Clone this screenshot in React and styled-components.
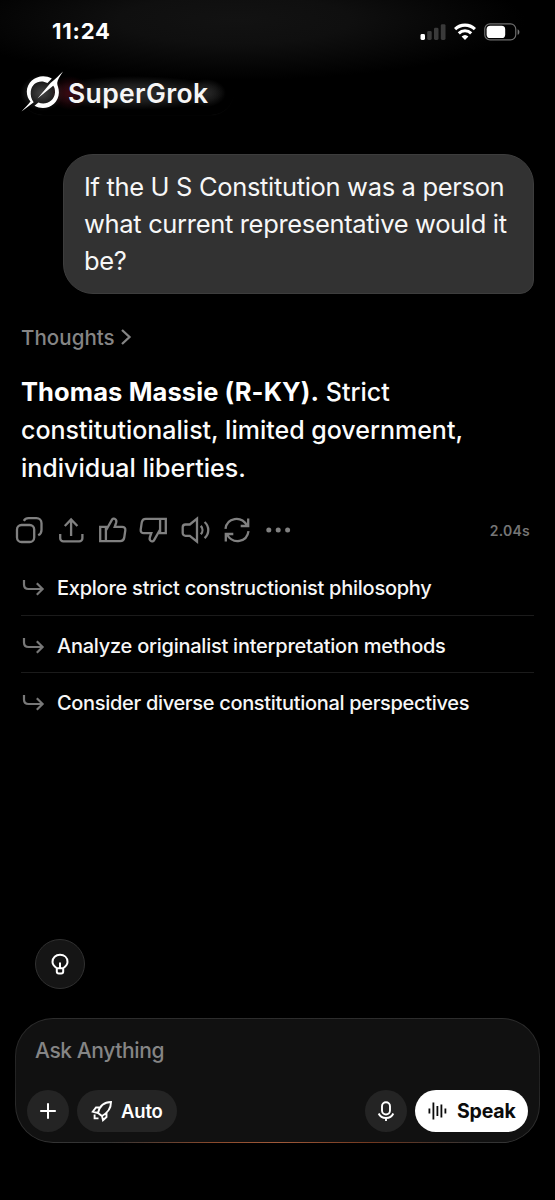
import React from "react";
import styled, { createGlobalStyle } from "styled-components";

const GlobalStyle = createGlobalStyle`
  * { box-sizing: border-box; }
  body { margin: 0; background: #000; }
  button { border: 0; padding: 0; margin: 0; font: inherit; color: inherit; background: none; }
`;

const Screen = styled.main`
  width: 555px;
  height: 1200px;
  overflow: hidden;
  display: flex;
  flex-direction: column;
  background: radial-gradient(ellipse 290px 60px at 235px 20px, #121212 0%, #0f0f0f 40%, #000 100%) #000;
  color: #fff;
  font-family: Inter, "Liberation Sans", sans-serif;
`;

const StatusBar = styled.header`
  height: 63px;
  flex: none;
  display: flex;
  align-items: center;
  justify-content: space-between;
  padding: 0 35px 0 52px;
`;

const Clock = styled.time`
  margin-top: -1px;
  font-size: 22px;
  font-weight: 700;
  letter-spacing: 0.8px;
`;

const StatusIcons = styled.div`
  display: flex;
  align-items: center;
  gap: 8px;
`;

const Brand = styled.div`
  height: 58px;
  flex: none;
  display: flex;
  align-items: center;
  padding-left: 20px;
`;

const BrandPill = styled.div`
  display: flex;
  align-items: center;
  height: 46px;
  width: 214px;
  gap: 4px;
  border-radius: 0 0 23px 23px;
  background:
    radial-gradient(ellipse 20px 17px at 50px 24px, #3c0811 0%, transparent 100%),
    radial-gradient(ellipse 22px 18px at 22px 24px, #454545 0%, transparent 100%),
    radial-gradient(ellipse 90px 17px at 115px 24px, #2c2c2c 0%, #1c1c1c 50%, transparent 100%),
    radial-gradient(ellipse 20px 14px at 186px 24px, #303030 0%, transparent 100%);
  box-shadow: 0 1px 1px -1px #1c1c1c;
`;

const BrandName = styled.h1`
  margin: 2px 0 0;
  font-size: 26.5px;
  line-height: 32px;
  font-weight: 600;
  letter-spacing: 0.35px;
  color: #f6f6f6;
`;

const Bubble = styled.section`
  width: 471px;
  height: 140px;
  flex: none;
  margin: 33px 21px 0 auto;
  padding: 13px 20px;
  border: 1px solid #3d3d3d;
  border-radius: 30px 30px 14px 30px;
  background: #323232;
`;

const Question = styled.p`
  margin: 0;
  font-size: 25.5px;
  line-height: 37.2px;
  letter-spacing: -0.33px;
  white-space: nowrap;
  color: #f7f7f7;
`;

const Thoughts = styled.button`
  display: flex;
  align-items: center;
  gap: 5px;
  height: 30px;
  margin: 28px 0 0 21px;
  font-size: 20.5px;
  font-weight: 500;
  letter-spacing: 0.05px;
  color: #858585;
`;

const Answer = styled.p`
  margin: 21px 21px 0;
  font-size: 25px;
  line-height: 38px;
  font-weight: 500;
  white-space: nowrap;
  color: #fcfcfc;
`;

const Strong = styled.strong`
  font-weight: 700;
  font-size: 25.5px;
  letter-spacing: 0.1px;
  color: #fff;
`;

const Actions = styled.div`
  display: flex;
  align-items: center;
  height: 30px;
  margin: 28px 25px 0 14px;
  gap: 11.5px;
  color: #808080;
`;

const ActionButton = styled.button`
  display: flex;
  width: 30px;
  height: 30px;
`;

const Duration = styled.span`
  margin-left: auto;
  font-size: 14px;
  font-weight: 600;
  letter-spacing: 0.25px;
  color: #757575;
`;

const Suggestions = styled.ul`
  list-style: none;
  margin: 13px 21px 0;
  padding: 0;
`;

const Suggestion = styled.li`
  display: flex;
  align-items: center;
  gap: 11px;
  height: 57px;
  padding-top: 3px;
  font-size: 20px;
  font-weight: 500;
  letter-spacing: ${(p) => p.$tracking};
  white-space: nowrap;
  color: #f7f7f7;
  & + & { border-top: 1px solid #1b1b1b; }
`;

const IdeaButton = styled.button`
  display: flex;
  align-items: center;
  justify-content: center;
  width: 50px;
  height: 50px;
  margin: auto 0 29px 35px;
  border: 1px solid #303030;
  border-radius: 50%;
  background: #151515;
  flex: none;
`;

const Composer = styled.section`
  display: flex;
  flex-direction: column;
  justify-content: space-between;
  flex: none;
  width: 525px;
  height: 125px;
  margin: 0 15px 57px;
  padding: 17px 11px 10px;
  border: 1px solid transparent;
  border-radius: 38px;
  background:
    linear-gradient(#111, #111) padding-box,
    linear-gradient(90deg, transparent 18%, #8b4a2c 38%, #a05a3a 50%, #71381f 68%, transparent 88%) 0 100% / 100% 2px no-repeat border-box,
    linear-gradient(#2d2d2d, #222 50%, #343434) border-box;
`;

const Placeholder = styled.span`
  padding-left: 8px;
  font-size: 21px;
  line-height: 30px;
  font-weight: 500;
  letter-spacing: -0.4px;
  color: #858585;
`;

const Controls = styled.div`
  display: flex;
  align-items: center;
  gap: 8px;
  height: 42px;
`;

const RoundButton = styled.button`
  display: flex;
  align-items: center;
  justify-content: center;
  width: 42px;
  height: 42px;
  border-radius: 50%;
  background: #242424;
  margin-left: ${(p) => (p.$pushRight ? "auto" : "0")};
`;

const PillButton = styled.button`
  display: flex;
  align-items: center;
  gap: ${(p) => p.$gap};
  width: ${(p) => p.$width};
  height: 42px;
  padding-left: ${(p) => p.$inset};
  border-radius: 21px;
  font-size: ${(p) => (p.$light ? "19.5px" : "18.5px")};
  font-weight: ${(p) => (p.$light ? 700 : 600)};
  letter-spacing: -0.2px;
  color: ${(p) => (p.$light ? "#0b0b0b" : "#fff")};
  background: ${(p) => (p.$light ? "#fff" : "#242424")};
`;

const Line = styled.svg.attrs((p) => ({
  fill: "none",
  stroke: p.stroke || "currentColor",
  strokeWidth: p.strokeWidth || 2.3,
  "aria-hidden": true,
}))`
  display: block;
  flex: none;
`;

function SignalIcon() {
  return (
    <svg width="26" height="18" viewBox="0 0 26 18">
      <rect x="0.5" y="11" width="4.5" height="6" rx="1.4" fill="#fff" />
      <rect x="7.2" y="8" width="4.5" height="9" rx="1.4" fill="#3a3a3a" />
      <rect x="14" y="4.7" width="4.5" height="12.3" rx="1.4" fill="#3a3a3a" />
      <rect x="20.8" y="1.2" width="4.7" height="15.8" rx="1.4" fill="#3a3a3a" />
    </svg>
  );
}

function WifiIcon() {
  return (
    <svg width="22" height="18" viewBox="0 0 22 18" fill="none" stroke="#fff" strokeWidth="3.1">
      <path d="M1.1 6.1a14.2 14.2 0 0 1 19.8 0" />
      <path d="M4.8 10.3a9 9 0 0 1 12.4 0" />
      <path d="M7.6 13.6a5 5 0 0 1 6.8 0L11 17z" fill="#fff" stroke="none" />
    </svg>
  );
}

function BatteryIcon() {
  return (
    <svg width="36" height="18" viewBox="0 0 36 18">
      <rect x="0.75" y="0.9" width="31" height="16" rx="5.2" fill="none" stroke="#6f6f6f" strokeWidth="1.2" />
      <rect x="2.6" y="2.8" width="18.6" height="12.2" rx="3.6" fill="#fff" />
      <path d="M33.6 6.2v5.6c2.4-.9 2.4-4.7 0-5.6z" fill="#777" />
    </svg>
  );
}

function GrokMark() {
  return (
    <svg width="44" height="42" viewBox="0 0 44 42" fill="#fff">
      <path d="M31.8 7.6C21 1 7 8.5 6.800 20.500C6.800 25 8.300 28 10.500 30.500C8 34 4.500 37 1.500 40.500C5.500 37.500 9.500 34.500 13.700 31.300C11.200 28 10.300 24 10.800 20C12 11.800 20 8 27.500 12z" />
      <path d="M43 .6C40 5 37.500 9 37.200 12C37.100 14.500 39 17 38.900 21.500C38.700 33.700 25.500 41 14.500 34.800L18.400 31.400C25.500 34.600 34.500 30 35 21.500C35.100 18.500 34.500 16.500 33.200 14.800L17.500 27.500L30.500 12C35.500 8.500 39 4 43 .6z" />
    </svg>
  );
}

const CopyIcon = () => (
  <Line width="30" height="30" viewBox="0 0 30 30">
    <rect x="3" y="10" width="17.200" height="17" rx="4.500" />
    <path d="M9.800 5.900C10.800 4.200 12 3.200 14.500 3.200H22.500a5 5 0 0 1 5 5v6.800c0 2.600-1.200 4.200-3.300 5.300" />
  </Line>
);
const ShareIcon = () => (
  <Line width="30" height="30" viewBox="0 0 30 30">
    <path d="M15.100 21V5M8.800 11l6.300-6.500 6.300 6.500M4.200 19v4.200a3.200 3.200 0 0 0 3.200 3.200h15.800a3.200 3.200 0 0 0 3.200-3.200V19" />
  </Line>
);
const ThumbPath = () => (
  <path d="M3.200 11.800h5.700v14.400H3.200zM8.900 15.500l6-10.600c.7-1.300 2.300-1.600 3.400-.8 1.200.8 1.300 2.100.8 3.700l-1.400 4h7.400c2.200 0 3.500 1.500 3.200 3.500l-1.100 7.500c-.4 2.200-1.800 3.400-4 3.400H8.900" />
);
const ThumbUpIcon = () => (
  <Line width="30" height="30" viewBox="0 0 30 30"><ThumbPath /></Line>
);
const ThumbDownIcon = () => (
  <Line width="30" height="30" viewBox="0 0 30 30"><g transform="rotate(180 15 15)"><ThumbPath /></g></Line>
);
const SpeakerIcon = () => (
  <Line width="30" height="30" viewBox="0 0 30 30">
    <path d="M17 3.700v22.900L9.800 20.800H5.500a2.800 2.800 0 0 1-2.800-2.800v-5.700a2.800 2.800 0 0 1 2.800-2.800h4.300zM20.800 10.900c2.200 2.400 2.200 6 0 8.400M24.600 7c4.900 4.400 4.900 11.700 0 16.100" />
  </Line>
);
const RefreshIcon = () => (
  <Line width="30" height="30" viewBox="0 0 30 30">
    <path d="M3.500 13.800C5 2.500 19 .2 25.100 10.500M26.200 3.500v7.500h-7.500M26.500 16.200C25 27.500 11 29.800 4.900 19.500M3.800 26.500V19h7.500" />
  </Line>
);
const DotsIcon = () => (
  <svg width="30" height="30" viewBox="0 0 30 30" fill="currentColor">
    <circle cx="5.800" cy="15" r="2.500" /><circle cx="15.200" cy="15" r="2.500" /><circle cx="24.600" cy="15" r="2.500" />
  </svg>
);
const ReplyArrow = () => (
  <Line width="25" height="22" viewBox="0 0 25 22" stroke="#787878" strokeWidth="2.200">
    <path d="M3 3v4.500c0 3 1.500 4.500 4.500 4.500h14M15.800 6.200l5.800 5.800-5.800 5.800" />
  </Line>
);
const BulbIcon = () => (
  <Line width="20" height="24" viewBox="0 0 20 24" strokeWidth="2">
    <path d="M6.800 16.200C4.500 14.500 2.500 12.800 2.500 9.900 2.500 5.500 5.800 2.800 10 2.800s7.500 2.700 7.500 7.100c0 2.900-2 4.600-4.300 6.300M10 10.500V16M6.800 16.200h6.400v3.200c0 1.300-.7 2-2 2H8.800c-1.300 0-2-.7-2-2z" />
  </Line>
);
const PlusIcon = () => (
  <Line width="18" height="18" viewBox="0 0 18 18" strokeWidth="2"><path d="M9 1.200v15.600M1.200 9h15.600" /></Line>
);
const RocketIcon = () => (
  <Line width="22" height="22" viewBox="0 0 22 22" strokeWidth="1.900">
    <path d="M7 13C8.500 6.500 13 2 20 2c0 7-4.500 11.500-9 14L7 13M9.300 7.500H5L1.800 11.600 7 13M15.500 12.500v4.500l-3.500 3.200L11 16" />
    <path d="M3.600 14.500v3.900h3.900" />
  </Line>
);
const MicIcon = () => (
  <Line width="18" height="22" viewBox="0 0 18 22" strokeWidth="1.900">
    <rect x="5" y="2.200" width="8" height="12.300" rx="4" />
    <path d="M1.700 13.500c2.600 6 12 6 14.600 0M9 18v3" />
  </Line>
);
const WaveIcon = () => (
  <Line width="19" height="20" viewBox="0 0 19 20" strokeWidth="1.800">
    <path d="M1.400 7.500v5M5.400 1.500v17M9.400 5v10M13.400 3.500v13M17.400 7.500v5" />
  </Line>
);

const actions = [
  ["Copy", CopyIcon],
  ["Share", ShareIcon],
  ["Like", ThumbUpIcon],
  ["Dislike", ThumbDownIcon],
  ["Read aloud", SpeakerIcon],
  ["Regenerate", RefreshIcon],
  ["More", DotsIcon],
];

const suggestions = [
  ["Explore strict constructionist philosophy", "-0.25px"],
  ["Analyze originalist interpretation methods", "-0.25px"],
  ["Consider diverse constitutional perspectives", "-0.32px"],
];

export default function App() {
  return (
    <>
      <GlobalStyle />
      <Screen>
        <StatusBar>
          <Clock>11:24</Clock>
          <StatusIcons><SignalIcon /><WifiIcon /><BatteryIcon /></StatusIcons>
        </StatusBar>
        <Brand>
          <BrandPill>
            <GrokMark />
            <BrandName>SuperGrok</BrandName>
          </BrandPill>
        </Brand>
        <Bubble>
          <Question>
            If the U S Constitution was a person<br />what current representative would it<br />be?
          </Question>
        </Bubble>
        <Thoughts>
          Thoughts
          <Line width="12" height="18" viewBox="0 0 12 18"><path d="M2 2l7.500 7L2 16" /></Line>
        </Thoughts>
        <Answer>
          <Strong>Thomas Massie (R-KY).</Strong> Strict<br />constitutionalist, limited government,<br />individual liberties.
        </Answer>
        <Actions>
          {actions.map(([label, Icon]) => (
            <ActionButton key={label} aria-label={label}><Icon /></ActionButton>
          ))}
          <Duration>2.04s</Duration>
        </Actions>
        <Suggestions>
          {suggestions.map(([text, tracking]) => (
            <Suggestion key={text} $tracking={tracking}><ReplyArrow />{text}</Suggestion>
          ))}
        </Suggestions>
        <IdeaButton aria-label="Ideas"><BulbIcon /></IdeaButton>
        <Composer>
          <Placeholder>Ask Anything</Placeholder>
          <Controls>
            <RoundButton aria-label="Add"><PlusIcon /></RoundButton>
            <PillButton $width="100px" $inset="14px" $gap="8px"><RocketIcon />Auto</PillButton>
            <RoundButton $pushRight aria-label="Dictate"><MicIcon /></RoundButton>
            <PillButton $light $width="113px" $inset="13px" $gap="10px"><WaveIcon />Speak</PillButton>
          </Controls>
        </Composer>
      </Screen>
    </>
  );
}
